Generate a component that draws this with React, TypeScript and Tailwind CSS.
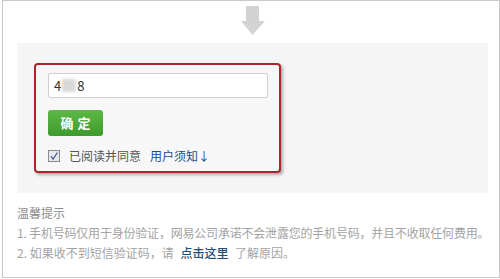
export default function App() {
  return (
    <div className="w-[500px] h-[279px] bg-white overflow-hidden" style={{ fontFamily: '"Noto Sans CJK SC", "Liberation Sans", sans-serif' }}>
      <div className="ml-[2px] w-[498px] h-[278px] border border-[#c9c9c9] bg-white">
        <div className="flex justify-center pl-[4px] pt-[5px] h-[42px]">
          <svg width="24" height="30" viewBox="0 0 24 30">
            <path d="M5 0 H18 V15 H24 L11.5 29 L0 15 H5 Z" fill="#d3d3d3" />
          </svg>
        </div>
        <div className="ml-[14px] w-[471px] h-[150px] bg-[#f5f5f5] pt-[20px] pl-[17px]">
          <div className="w-[247px] h-[110px] rounded-[4px] border-2 border-[#a8262c] bg-[#f7f7f7] shadow-[2px_2px_3px_rgba(0,0,0,0.3)] pt-[8px] pl-[12px]">
            <div className="w-[220px] h-[25px] bg-white border border-[#cfcfcf] rounded-[2px] flex items-center pl-[5px] text-[13px] text-[#333]">
              <span>4</span>
              <span className="w-[14px] h-[13px] mx-[1px] bg-[#d9d9d9] blur-[1.5px]" />
              <span>8</span>
            </div>
            <button className="mt-[12px] w-[55px] h-[26px] rounded-[3px] bg-gradient-to-b from-[#5cb845] to-[#3f9a2e] text-white text-[13px] font-bold tracking-[4px] pl-[4px]">
              确定
            </button>
            <div className="mt-[12px] flex items-center h-[16px] text-[12px]">
              <span className="w-[12px] h-[12px] border border-[#8a8a8a] bg-[#e6e9f0] flex items-center justify-center">
                <svg width="10" height="10" viewBox="0 0 10 10">
                  <path d="M2 5 L4 8 L8.5 1.5" stroke="#4a5a80" strokeWidth="1.3" fill="none" />
                </svg>
              </span>
              <span className="ml-[9px] text-[#555]">已阅读并同意</span>
              <span className="ml-[9px] text-[#1d4b86]">用户须知↓</span>
            </div>
          </div>
        </div>
        <div className="pl-[14px] pt-[10px] text-[12px] leading-[20px] text-[#a3a3a3]">
          <div className="text-[#8c8c8c]">温馨提示</div>
          <div className="tracking-[-0.2px]">1. 手机号码仅用于身份验证，网易公司承诺不会泄露您的手机号码，并且不收取任何费用。</div>
          <div>
            2. 如果收不到短信验证码，请 <span className="text-[#1d4e7a] font-medium mx-[4px]">点击这里</span> 了解原因。
          </div>
        </div>
      </div>
    </div>
  );
}
